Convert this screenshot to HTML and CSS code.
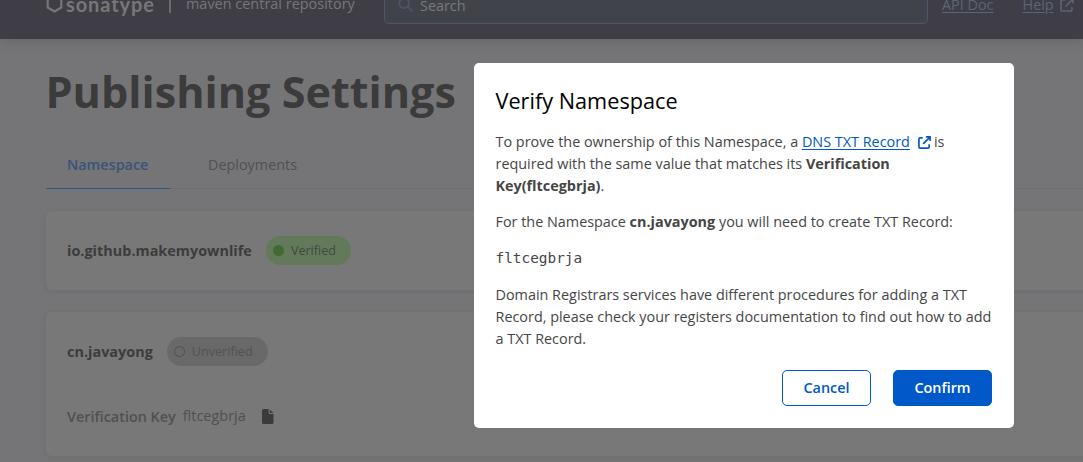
FILE: index.html
```html
<!DOCTYPE html>
<html lang="en">
<head>
<meta charset="utf-8">
<title>Publishing Settings</title>
<link rel="stylesheet" href="styles.css">
</head>
<body>
<header class="topbar">
  <div class="brand">
    <svg class="brand-mark" width="17" height="20" viewBox="0 0 17 20"><path d="M8.500 1.500 15.300 5.500v9L8.500 18.500 1.700 14.500v-9Z" fill="none" stroke="currentColor" stroke-width="2.200"/></svg>
    <span class="brand-name">sonatype</span>
    <span class="brand-divider"></span>
    <span class="brand-product">maven central repository</span>
  </div>
  <div class="search">
    <svg width="16" height="16" viewBox="0 0 16 16" fill="none" stroke="currentColor" stroke-width="1.8"><circle cx="6.2" cy="6.2" r="4.9"/><path d="m9.800 9.800 4.600 4.600"/></svg>
    <span>Search</span>
  </div>
  <nav class="links">
    <a>API Doc</a>
    <a class="help">Help</a>
    <svg class="external" width="14" height="14" viewBox="0 0 14 14" fill="none" stroke="currentColor" stroke-width="1.6"><path d="M5 2H2.2Q1 2 1 3.200V11.800Q1 13 2.200 13H10.800Q12 13 12 11.800V9M8.500 1H13V5.500M12.800 1.200 5.500 8.500"/></svg>
  </nav>
</header>
<main class="page">
  <h1>Publishing Settings</h1>
  <div class="tabs">
    <div class="tab active">Namespace</div>
    <div class="tab">Deployments</div>
  </div>
  <section class="card card-verified">
    <div class="row">
      <strong>io.github.makemyownlife</strong>
      <span class="badge verified"><i class="dot"></i>Verified</span>
    </div>
  </section>
  <section class="card card-pending">
    <div class="row">
      <strong>cn.javayong</strong>
      <span class="badge unverified"><i class="dot"></i>Unverified</span>
    </div>
    <div class="key-row">
      <span class="key-label">Verification Key</span>
      <span class="key-value">fltcegbrja</span>
      <svg class="file" width="12" height="15" viewBox="0 0 12 15" fill="currentColor"><path d="M1.500 0H6.600V3.600Q6.600 5 8 5H11.500V13.500Q11.500 15 10 15H1.500Q0 15 0 13.500V1.500Q0 0 1.500 0ZM7.700.2 11.300 3.900H8.400Q7.700 3.900 7.700 3.200Z"/></svg>
    </div>
  </section>
</main>
<div class="dialog" role="dialog">
  <h2>Verify Namespace</h2>
  <p>To prove the ownership of this Namespace, a <a>DNS TXT Record</a><svg class="link-icon" width="13" height="13" viewBox="0 0 14 14" fill="none" stroke="currentColor" stroke-width="1.8"><path d="M5 2H2.200Q1 2 1 3.200V11.800Q1 13 2.200 13H10.800Q12 13 12 11.800V9M8.500 1H13V5.500M12.800 1.200 5.500 8.500"/></svg>is<br>required with the same value that matches its <b>Verification<br>Key(fltcegbrja)</b>.</p>
  <p>For the Namespace <b>cn.javayong</b> you will need to create TXT Record:</p>
  <p class="code">fltcegbrja</p>
  <p>Domain Registrars services have different procedures for adding a TXT<br>Record, please check your registers documentation to find out how to add<br>a TXT Record.</p>
  <div class="actions">
    <button class="cancel">Cancel</button>
    <button class="confirm">Confirm</button>
  </div>
</div>
</body>
</html>
```
FILE: styles.css
```css
* { box-sizing: border-box; }
body {
  margin: 0;
  height: 462px;
  overflow: hidden;
  background: #757577;
  color: #3c3c3c;
  font: 14.4px/21.7px "Open Sans", sans-serif;
}
.topbar {
  display: flex;
  align-items: center;
  height: 70px;
  margin-top: -31px;
  padding-left: 46px;
  background: #3f3e47;
  color: #777;
  box-shadow: 0 2px 10px rgba(50, 55, 60, .25);
}
.brand { display: flex; align-items: center; width: 338px; }
.brand-mark { flex: none; margin-top: -2px; }
.brand-name { width: 90px; margin-left: 3px; font: 700 20px/24px Lato, sans-serif; letter-spacing: .9px; margin-top: -1px; }
.brand-divider { width: 2px; height: 17px; margin: 0 15px 0 13px; background: #6c6c6f; }
.brand-product { white-space: nowrap; letter-spacing: .03px; }
.search {
  display: flex;
  align-items: center;
  gap: 6px;
  width: 544px;
  height: 38px;
  margin-top: 1px;
  padding: 2px 0 0 13px;
  border: 1px solid #56546a;
  border-radius: 5px;
  background: #41434b;
  color: #7a7a7b;
}
.search svg { margin-top: -2px; color: #50536a; }
.links { display: flex; align-items: center; margin: 2px 0 0 14px; color: #596675; }
.links a { text-decoration: underline; text-underline-offset: 2px; }
.help { margin-left: 29px; }
.external { margin-left: 6px; }
.page { width: 1120px; padding: 21px 0 0 46px; }
h1 { margin: 0 0 0 -.5px; font-size: 43.2px; line-height: 64px; font-weight: 700; color: #3b3b3b; }
.tabs { display: flex; height: 48px; margin-top: 17px; border-bottom: 1px solid #6e6e70; color: #505050; }
.tab { height: 48px; padding: 13px 21px 0; margin-right: 17px; }
.tab.active { width: 124px; border-bottom: 1px solid #2f548b; color: #3a5379; font-weight: 600; }
.card { border-radius: 6px; background: #787878; box-shadow: 0 1px 5px rgba(50, 50, 60, .1); padding-left: 21px; }
.card-verified { height: 79px; margin-top: 22px; padding-top: 25px; }
.card-pending { height: 144px; margin-top: 22px; padding-top: 25px; }
.row { display: flex; align-items: center; gap: 14px; height: 29px; }
.row strong { letter-spacing: .02px; }
.badge { display: flex; align-items: center; height: 29px; padding-left: 7px; border-radius: 15px; font-size: 12.600px; }
.dot { width: 11px; height: 11px; margin-right: 7px; border-radius: 50%; }
.verified { width: 85px; background: #627a5a; color: #404840; }
.verified .dot { background: #426934; }
.unverified { width: 101px; background: #696969; color: #525252; }
.unverified .dot { border: 1px solid #505050; }
.key-row { display: flex; align-items: center; height: 24px; margin-top: 39px; color: #505050; }
.key-label { font-weight: 600; }
.key-value { margin: -2px 0 0 7px; letter-spacing: .03px; }
.file { margin: -1px 0 0 16px; color: #3b3b3b; }
.dialog {
  position: absolute;
  left: 474px;
  top: 63px;
  width: 540px;
  height: 365px;
  padding: 22px 22px 22px 21.5px;
  border-radius: 5px;
  background: #fff;
  color: #454545;
}
h2 { margin: 0 0 14px; font-size: 21.700px; line-height: 32px; font-weight: 400; color: #000; }
p { margin: 0 0 14.500px; line-height: 21.8px; white-space: nowrap; }
p a { color: #0058c9; text-decoration: underline; text-underline-offset: 2px; }
.link-icon { margin: 0 3px 0 8px; color: #0058c9; vertical-align: -2px; }
.code { padding-top: 1px; margin-bottom: 14px; font-family: "DejaVu Sans Mono", monospace; }
.actions { display: flex; justify-content: flex-end; gap: 22px; margin-top: 20.500px; }
button { height: 36px; padding: 0; border: 1px solid #0058c9; border-radius: 5px; font: 600 14.400px/20px "Open Sans", sans-serif; }
.cancel { width: 89px; background: #fff; color: #0058c9; }
.confirm { width: 99px; background: #0058c9; color: #fff; }
```
